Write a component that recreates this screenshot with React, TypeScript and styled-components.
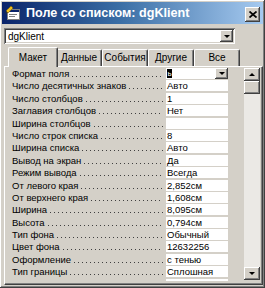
import styled, { createGlobalStyle } from 'styled-components'

const GlobalStyle = createGlobalStyle`
    html, body {
        margin: 0;
        padding: 0;
        background: #d4d0c8;
    }
    * { box-sizing: border-box; }
`

const raised = `
    box-shadow: inset -1px -1px #404040, inset 1px 1px #ffffff,
        inset -2px -2px #808080, inset 2px 2px #d4d0c8;
`
const sunken = `
    box-shadow: inset 1px 1px #808080, inset -1px -1px #ffffff,
        inset 2px 2px #404040, inset -2px -2px #d4d0c8;
`

const Window = styled.div`
    width: 265px;
    height: 288px;
    padding: 2px;
    background: #d4d0c8;
    font-family: "Liberation Sans", Arial, sans-serif;
    color: #000;
    display: flex;
    flex-direction: column;
    overflow: hidden;
    ${raised}
`
const TitleBar = styled.div`
    height: 22px;
    display: flex;
    align-items: center;
    padding: 0 3px 0 3px;
    background: linear-gradient(90deg, #0a246a 0%, #3a6ea5 45%, #a6caf0 100%);
`
const TitleText = styled.div`
    flex: 1;
    margin-left: 5px;
    color: #fff;
    font-weight: bold;
    font-size: 12.6px;
    white-space: nowrap;
`
const CloseButton = styled.div`
    width: 15px;
    height: 15px;
    background: #d4d0c8;
    display: flex;
    align-items: center;
    justify-content: center;
    margin-top: 2px;
    ${raised}
`
const Body = styled.div`
    flex: 1;
    display: flex;
    flex-direction: column;
    padding: 4px 0 0 2px;
    min-height: 0;
`
const Combo = styled.div`
    width: 231px;
    height: 16px;
    background: #fff;
    display: flex;
    align-items: center;
    padding: 2px;
    ${sunken}
`
const ComboText = styled.div`
    flex: 1;
    font-size: 10px;
    padding-left: 2px;
`
const DropButton = styled.div<{ $w?: number; $h?: number }>`
    width: ${p => p.$w ?? 13}px;
    height: ${p => p.$h ?? 12}px;
    background: #d4d0c8;
    display: flex;
    align-items: center;
    justify-content: center;
    ${raised}
`
const Arrow = styled.div<{ $up?: boolean }>`
    width: 0;
    height: 0;
    border-left: 3px solid transparent;
    border-right: 3px solid transparent;
    ${p => p.$up ? 'border-bottom: 3px solid #000;' : 'border-top: 3px solid #000;'}
`
const TabStrip = styled.div`
    display: flex;
    align-items: flex-end;
    height: 19px;
    margin-top: 3px;
    padding-left: 4px;
    position: relative;
    z-index: 1;
`
const Tab = styled.div<{ $active?: boolean }>`
    width: ${p => p.$active ? 50 : 46}px;
    height: ${p => p.$active ? 20 : 17}px;
    margin: 0 ${p => p.$active ? -2 : 0}px 0 0;
    background: #d4d0c8;
    border-top: 1px solid #fff;
    border-left: 1px solid #fff;
    border-right: 1px solid #404040;
    border-radius: 2px 2px 0 0;
    box-shadow: inset -1px 0 #808080;
    font-size: 10px;
    display: flex;
    justify-content: center;
    padding-top: ${p => p.$active ? 4 : 2}px;
    margin-bottom: ${p => p.$active ? -1 : 0}px;
    ${p => p.$active ? 'position: relative; z-index: 2;' : ''}
`
const Panel = styled.div`
    flex: 1;
    margin: 0 0 1px 0;
    width: 259px;
    display: flex;
    padding: 1px 2px 3px 3px;
    border-top: 1px solid #fff;
    border-left: 1px solid #fff;
    border-right: 1px solid #404040;
    border-bottom: 1px solid #404040;
    box-shadow: inset -1px -1px #808080;
    min-height: 0;
`
const Grid = styled.div`
    flex: 1;
    overflow: hidden;
    display: flex;
    flex-direction: column;
`
const Row = styled.div`
    height: 12.4px;
    flex: none;
    display: flex;
    font-size: 9.5px;
`
const Label = styled.div`
    width: 158px;
    display: flex;
    align-items: center;
    padding: 0 3px 0 4px;
    height: 11px;
`
const LabelText = styled.span`
    white-space: nowrap;
`
const Leader = styled.span`
    flex: 1;
    height: 1px;
    align-self: flex-end;
    margin: 0 0 2px 3px;
    background-image: linear-gradient(90deg, #404040 1px, transparent 1px);
    background-size: 4px 1px;
    background-repeat: repeat-x;
`
const Value = styled.div`
    width: 62px;
    height: 11px;
    background: #fff;
    display: flex;
    align-items: center;
    padding-left: 1px;
    white-space: nowrap;
`
const Caret = styled.span`
    width: 5px;
    height: 9px;
    background: #000;
    color: #fff;
    font-size: 8px;
    line-height: 9px;
    text-align: center;
`
const Spacer = styled.span`
    flex: 1;
`
const ScrollBar = styled.div`
    width: 16px;
    margin-left: 2px;
    display: flex;
    flex-direction: column;
    background: #ebe9e5;
    margin-bottom: 1px;
`
const Thumb = styled.div`
    height: 13px;
    background: #d4d0c8;
    ${raised}
`
const Track = styled.div`
    flex: 1;
`

const rows: [string, string][] = [
    ['Формат поля', ''],
    ['Число десятичных знаков', 'Авто'],
    ['Число столбцов', '1'],
    ['Заглавия столбцов', 'Нет'],
    ['Ширина столбцов', ''],
    ['Число строк списка', '8'],
    ['Ширина списка', 'Авто'],
    ['Вывод на экран', 'Да'],
    ['Режим вывода', 'Всегда'],
    ['От левого края', '2,852см'],
    ['От верхнего края', '1,608см'],
    ['Ширина', '8,095см'],
    ['Высота', '0,794см'],
    ['Тип фона', 'Обычный'],
    ['Цвет фона', '12632256'],
    ['Оформление', 'с тенью'],
    ['Тип границы', 'Сплошная'],
    ['Цвет границы', '8421376'],
]

const tabs = ['Макет', 'Данные', 'События', 'Другие', 'Все']

const FormIcon = () => (
    <svg width="16" height="16" viewBox="0 0 16 16">
        <rect x="2.5" y="4.5" width="12" height="10" fill="#fff" stroke="#808080" />
        <rect x="3" y="5" width="11" height="2" fill="#0a246a" />
        <rect x="4" y="9" width="8" height="1" fill="#808080" />
        <rect x="4" y="11" width="6" height="1" fill="#808080" />
        <path d="M1 6 L6 1 L8 3 L3 8 Z" fill="#f0c020" stroke="#806000" strokeWidth="0.6" />
        <path d="M1 6 L3 8 L0.5 8.5 Z" fill="#333" />
    </svg>
)

const App = () => {
    return (
        <>
            <GlobalStyle />
            <Window>
                <TitleBar>
                    <FormIcon />
                    <TitleText>Поле со списком: dgKlient</TitleText>
                    <CloseButton>
                        <svg width="8" height="7" viewBox="0 0 8 7">
                            <path d="M0.5 0.5 L7.5 6.5 M7.5 0.5 L0.5 6.5" stroke="#000" strokeWidth="1.7" />
                        </svg>
                    </CloseButton>
                </TitleBar>
                <Body>
                    <Combo>
                        <ComboText>dgKlient</ComboText>
                        <DropButton $w={13} $h={12}><Arrow /></DropButton>
                    </Combo>
                    <TabStrip>
                        {tabs.map((t, i) => (
                            <Tab key={t} $active={i === 0}>{t}</Tab>
                        ))}
                    </TabStrip>
                    <Panel>
                        <Grid>
                            {rows.map(([label, value], i) => (
                                <Row key={label}>
                                    <Label>
                                        <LabelText>{label}</LabelText>
                                        <Leader />
                                    </Label>
                                    {i === 0 ? (
                                        <Value>
                                            <Caret>ь</Caret>
                                            <Spacer />
                                            <DropButton $w={13} $h={11}><Arrow /></DropButton>
                                        </Value>
                                    ) : (
                                        <Value>{value}</Value>
                                    )}
                                </Row>
                            ))}
                        </Grid>
                        <ScrollBar>
                            <DropButton $w={16} $h={13}><Arrow $up /></DropButton>
                            <Thumb />
                            <Track />
                            <DropButton $w={16} $h={13}><Arrow /></DropButton>
                        </ScrollBar>
                    </Panel>
                </Body>
            </Window>
        </>
    )
}

export default App
